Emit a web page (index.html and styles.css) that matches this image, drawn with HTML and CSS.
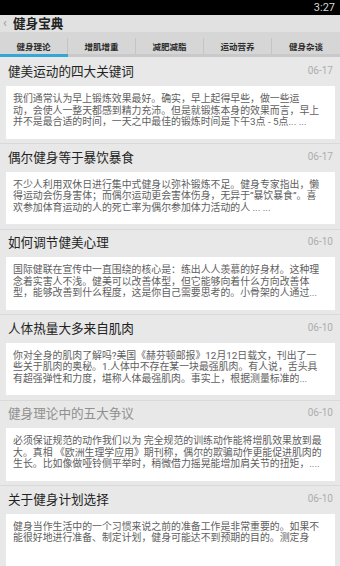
FILE: index.html
```html
<!DOCTYPE html>
<html lang="zh-CN">
<head>
<meta charset="utf-8">
<title>健身宝典</title>
<link rel="stylesheet" href="styles.css">
</head>
<body>
<div class="screen">
  <div class="statusbar"><span class="clock">3:27</span></div>
  <header class="appbar">
    <span class="back">‹</span>
    <span class="apptitle">健身宝典</span>
  </header>
  <nav class="tabs">
    <div class="tab active"><span class="tab-label">健身理论</span><span class="tab-div"></span></div>
    <div class="tab"><span class="tab-label">增肌增重</span><span class="tab-div"></span></div>
    <div class="tab"><span class="tab-label">减肥减脂</span><span class="tab-div"></span></div>
    <div class="tab"><span class="tab-label">运动营养</span><span class="tab-div"></span></div>
    <div class="tab"><span class="tab-label">健身杂谈</span></div>
  </nav>
  <main class="list">
    <article class="item">
      <div class="item-head"><h2 class="item-title">健美运动的四大关键词</h2><span class="item-date">06-17</span></div>
      <p class="item-card">我们通常认为早上锻炼效果最好。确实，早上起得早些，做一些运<br>动，会使人一整天都感到精力充沛。但是就锻炼本身的效果而言，早上<br>并不是最合适的时间，一天之中最佳的锻炼时间是下午3点 - 5点... ...</p>
    </article>
    <article class="item">
      <div class="item-head"><h2 class="item-title">偶尔健身等于暴饮暴食</h2><span class="item-date">06-17</span></div>
      <p class="item-card">不少人利用双休日进行集中式健身以弥补锻炼不足。健身专家指出，懒<br>得运动会伤身害体；而偶尔运动更会害体伤身，无异于“暴饮暴食”。喜<br>欢参加体育运动的人的死亡率为偶尔参加体力活动的人 ... ...</p>
    </article>
    <article class="item">
      <div class="item-head"><h2 class="item-title">如何调节健美心理</h2><span class="item-date">06-10</span></div>
      <p class="item-card">国际健联在宣传中一直围绕的核心是：练出人人羡慕的好身材。这种理<br>念着实害人不浅。健美可以改善体型，但它能够向着什么方向改善体<br>型，能够改善到什么程度，这是你自己需要思考的。小骨架的人通过...</p>
    </article>
    <article class="item">
      <div class="item-head"><h2 class="item-title">人体热量大多来自肌肉</h2><span class="item-date">06-10</span></div>
      <p class="item-card">你对全身的肌肉了解吗?美国《赫芬顿邮报》12月12日载文，刊出了一<br>些关于肌肉的奥秘。1.人体中不存在某一块最强肌肉。有人说，舌头具<br>有超强弹性和力度，堪称人体最强肌肉。事实上，根据测量标准的...</p>
    </article>
    <article class="item read">
      <div class="item-head"><h2 class="item-title">健身理论中的五大争议</h2><span class="item-date">06-10</span></div>
      <p class="item-card">必须保证规范的动作我们以为 完全规范的训练动作能将增肌效果放到最<br>大。真相 《欧洲生理学应用》期刊称，偶尔的欺骗动作更能促进肌肉的<br>生长。比如像做哑铃侧平举时，稍微借力摇晃能增加肩关节的扭矩，....</p>
    </article>
    <article class="item">
      <div class="item-head"><h2 class="item-title">关于健身计划选择</h2><span class="item-date">06-10</span></div>
      <p class="item-card">健身当作生活中的一个习惯来说之前的准备工作是非常重要的。如果不<br>能很好地进行准备、制定计划，健身可能达不到预期的目的。测定身</p>
    </article>
  </main>
</div>
</body>
</html>
```
FILE: styles.css
```css
html, body {
  margin: 0;
  padding: 0;
  background: #e8e8e8;
}
body {
  font-family: Roboto, "Noto Sans CJK SC", sans-serif;
  width: 340px;
  height: 566px;
  overflow: hidden;
}
.screen {
  display: flex;
  flex-direction: column;
  width: 340px;
  height: 566px;
  overflow: hidden;
}
.statusbar {
  height: 15px;
  background: #000;
  display: flex;
  justify-content: flex-end;
  align-items: center;
  padding-right: 5px;
}
.clock {
  color: #d6d6d6;
  font-size: 11px;
  line-height: 15px;
}
.appbar {
  height: 30px;
  background: #e1e1e1;
  display: flex;
  align-items: center;
  padding-left: 3px;
  padding-bottom: 1px;
  box-sizing: border-box;
}
.back {
  color: #9a9a9a;
  font-size: 13px;
  line-height: 13px;
  width: 10px;
  margin-top: -1px;
}
.apptitle {
  font-family: "Noto Sans CJK SC", sans-serif;
  font-size: 12.6px;
  font-weight: 700;
  color: #222;
  line-height: 16px;
}
.tabs {
  height: 33px;
  background: #d6d6d6;
  display: flex;
  padding-top: 6px;
  box-sizing: border-box;
}
.tab {
  flex: 1;
  display: flex;
  align-items: center;
  border-bottom: 3px solid #c9c9c9;
}
.tab.active {
  border-bottom-color: #36a6d9;
}
.tab-label {
  flex: 1;
  text-align: center;
  font-family: "Noto Sans CJK SC", sans-serif;
  font-size: 8.5px;
  font-weight: 700;
  color: #2c2c2c;
  line-height: 12px;
}
.tab-div {
  width: 1px;
  height: 16px;
  background: #c4c4c4;
}
.list {
  padding-top: 1.5px;
}
.item {
  height: 85.5px;
  box-sizing: border-box;
  border-bottom: 1px solid #d9d9d9;
}
.item-head {
  height: 27.5px;
  display: flex;
  align-items: center;
  justify-content: space-between;
  padding: 0 7px 2px 8px;
  box-sizing: border-box;
}
.item-title {
  margin: 0;
  font-family: "Noto Sans CJK SC", sans-serif;
  font-size: 12.6px;
  font-weight: 400;
  color: #222;
  line-height: 16px;
}
.read .item-title {
  color: #8f8f8f;
}
.item-date {
  font-size: 10px;
  color: #adadad;
  line-height: 12px;
}
.item-card {
  margin: 0 5px 0 6px;
  height: 52.5px;
  box-sizing: border-box;
  background: #fff;
  padding: 7px 0 0 7px;
  font-size: 9.9px;
  line-height: 11.7px;
  color: #5e5e5e;
  white-space: nowrap;
  overflow: hidden;
}
```
